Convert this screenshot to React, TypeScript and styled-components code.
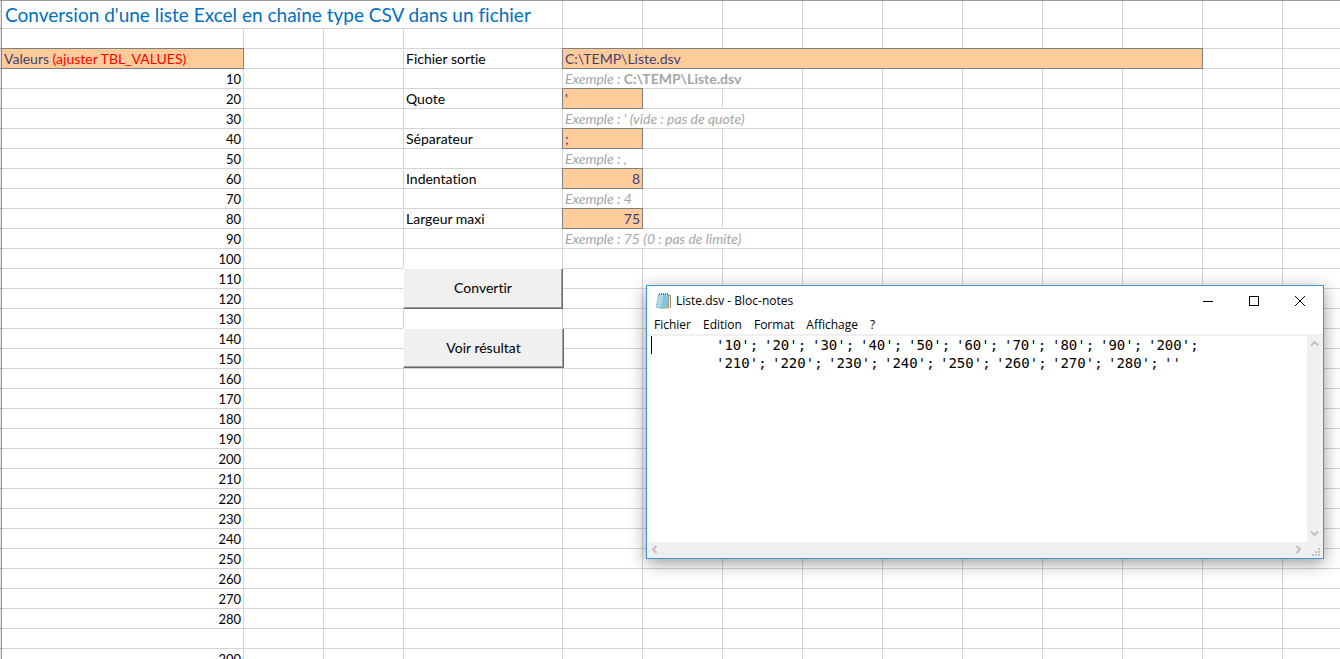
import React from "react";
import styled, { createGlobalStyle, css } from "styled-components";

const GlobalStyle = createGlobalStyle`
  *, *::before, *::after { box-sizing: border-box; }
  body { margin: 0; background: #fff; }
`;

const sheetFont = `Lato, "Open Sans", sans-serif`;
const windowFont = `"Open Sans", "Noto Sans", sans-serif`;

const Desktop = styled.main`
  position: relative;
  height: 100vh;
  overflow: hidden;
  border-top: 1px solid #999;
  font: 14px/19px ${sheetFont};
  font-variant-ligatures: none;
  color: #000;
`;

const Sheet = styled.table`
  width: 100%;
  min-width: 1364px;
  table-layout: fixed;
  border-collapse: separate;
  border-spacing: 0;
`;

const Column = styled.col<{ $width: number }>`
  width: ${(p) => p.$width}px;
`;

const Row = styled.tr<{ $tall?: boolean }>`
  height: ${(p) => (p.$tall ? 28 : 20)}px;
`;

const RowEdge = styled.td`
  padding: 0;
  background: #e4e4e4;
  border-right: 1px solid #999;
  border-bottom: 1px solid #999;
`;

const Cell = styled.td<{ $filled?: boolean; $align?: "left" | "right" }>`
  position: relative;
  padding: 0 2px;
  height: inherit;
  border-right: 1px solid #d4d4d4;
  border-bottom: 1px solid #d4d4d4;
  text-align: ${(p) => p.$align ?? "left"};
  white-space: nowrap;
  ${(p) =>
    p.$filled &&
    css`
      color: #3f3f76;
      background: #ffcc99;
      border-color: #7f7f7f;
      box-shadow: -1px 0 #7f7f7f, 0 -1px #7f7f7f, -1px -1px #7f7f7f;
    `}
`;

const NumberCell = styled(Cell)`
  padding-top: 2px;
  font-size: 13px;
  line-height: 17px;
`;

const Title = styled.h1`
  margin: 0;
  padding: 0 1px;
  font-size: 19px;
  line-height: 27px;
  font-weight: 400;
  color: #0070c0;
`;

const Warning = styled.span`
  color: #f00;
`;

const Label = styled.label`
  display: block;
`;

const Field = styled.input<{ $align?: "left" | "right" }>`
  display: block;
  width: 100%;
  height: 19px;
  padding: 0;
  border: 0;
  outline: 0;
  background: transparent;
  font: inherit;
  color: inherit;
  text-align: ${(p) => p.$align ?? "left"};
`;

const Hint = styled.span`
  font-style: italic;
  color: #a5a5a5;

  b {
    font-style: normal;
  }
`;

const SheetButton = styled.button<{ $width: number; $height: number }>`
  position: absolute;
  z-index: 1;
  top: -1px;
  left: -1px;
  width: ${(p) => p.$width}px;
  height: ${(p) => p.$height}px;
  padding: 0 0 2px;
  border: 1px solid;
  border-color: #fff #696969 #696969 #fff;
  box-shadow: inset -1px -1px #a0a0a0;
  background: #f0f0f0;
  font: inherit;
  color: inherit;
`;

const Notepad = styled.section`
  position: absolute;
  z-index: 2;
  top: 284px;
  left: 646px;
  width: 678px;
  height: 274px;
  display: flex;
  flex-direction: column;
  border: 1px solid #3c98d0;
  background: #fff;
  box-shadow: 0 4px 16px rgba(0, 0, 0, 0.4);
  font: 12px/18px ${windowFont};
`;

const TitleBar = styled.header`
  flex: 0 0 30px;
  display: flex;
  align-items: center;
  padding-left: 8px;
`;

const WindowTitle = styled.h2`
  flex: 1;
  margin: 0;
  padding-left: 4px;
  font: inherit;
`;

const CaptionButton = styled.button`
  display: grid;
  place-items: center;
  width: 46px;
  height: 28px;
  padding: 0;
  border: 0;
  background: transparent;
  color: #000;
`;

const MenuBar = styled.nav`
  flex: 0 0 20px;
  display: flex;
  gap: 12px;
  padding-left: 7px;
  border-bottom: 2px solid #f0f0f0;
`;

const MenuItem = styled.button`
  padding: 0;
  border: 0;
  background: transparent;
  font: inherit;
  color: #000;
`;

const Editor = styled.div`
  flex: 1;
  display: grid;
  grid-template: 1fr 16px / 1fr 16px;
  min-height: 0;
`;

const DocumentArea = styled.div`
  display: flex;
  min-width: 0;
  padding-left: 4px;
`;

const Caret = styled.span`
  flex: 0 0 1px;
  height: 18px;
  background: #000;
`;

const DocumentText = styled.textarea`
  flex: 1;
  min-width: 0;
  padding: 0;
  border: 0;
  outline: 0;
  resize: none;
  overflow: hidden;
  white-space: pre;
  tab-size: 8px;
  background: transparent;
  font: 14px/18px "DejaVu Sans Mono", "Liberation Mono", monospace;
  color: #000;
`;

const ScrollTrack = styled.div<{ $vertical?: boolean }>`
  display: flex;
  flex-direction: ${(p) => (p.$vertical ? "column" : "row")};
  justify-content: space-between;
  background: #f0f0f0;
`;

const ScrollButton = styled.button`
  display: grid;
  place-items: center;
  width: 16px;
  height: 16px;
  padding: 0 1px 1px 0;
  border: 0;
  background: transparent;
  color: #bfbfbf;
`;

const GripCorner = styled.div`
  display: flex;
  align-items: flex-end;
  justify-content: flex-end;
  padding: 0 3px 2px 0;
  background: #f0f0f0;
`;

const arrows = {
  up: "M1 6.500 4.500 3 8 6.500",
  down: "M1 2.500 4.500 6 8 2.500",
  left: "M6.500 1 3 4.500 6.500 8",
  right: "M2.500 1 6 4.500 2.500 8",
};

const Arrow = ({ to }: { to: keyof typeof arrows }) => (
  <svg width="9" height="9" viewBox="0 0 9 9" fill="none" stroke="currentColor" strokeWidth="2">
    <path d={arrows[to]} />
  </svg>
);

const NotepadIcon = () => (
  <svg width="17" height="18" viewBox="0 0 17 18">
    <path d="M4 16.500h10.500l1.500-1V3h-2z" fill="#a8906a" />
    <path d="M3.500 15.500h10.500V4.500h1V15l-1 1.500z" fill="#f5ecd0" />
    <path d="M3.500 2.500h10.500L12.500 15.500H1z" fill="#86c8da" />
    <path d="M3.500 2.500h5L5.500 15.500H1z" fill="#b4e0ea" />
    <path d="M3.300 5h10M3 7.500h10M2.500 10h10M2 12.500h10" stroke="#7cbdd0" strokeWidth=".5" />
    <path d="M3.500 2.500h10.500L12.500 15.500H1z" fill="none" stroke="#6fb0c2" strokeWidth=".5" />
    <path d="M4 2h10" stroke="#4b6a74" strokeWidth="1.500" strokeDasharray="1 1" />
  </svg>
);

const Grip = () => (
  <svg width="8" height="8" viewBox="0 0 8 8" fill="#bfbfbf">
    {[[6, 0], [3, 3], [6, 3], [0, 6], [3, 6], [6, 6]].map(([x, y]) => (
      <rect key={`${x}-${y}`} x={x} y={y} width="2" height="2" />
    ))}
  </svg>
);

const columnWidths = [2, 242, 80, 80, 159, 80, 80, 80, 80, 80, 80, 80, 80, 80];

const values: Record<number, number> = { 33: 200 };
for (let i = 1; i <= 28; i++) values[i + 3] = i * 10;

type Setting = {
  id: string;
  label: string;
  value: string;
  align?: "right";
  span: number;
};

const settings: Record<number, Setting> = {
  3: { id: "output", label: "Fichier sortie", value: "C:\\TEMP\\Liste.dsv", span: 8 },
  5: { id: "quote", label: "Quote", value: "'", span: 1 },
  7: { id: "separator", label: "Séparateur", value: ";", span: 1 },
  9: { id: "indent", label: "Indentation", value: "8", align: "right", span: 1 },
  11: { id: "width", label: "Largeur maxi", value: "75", align: "right", span: 1 },
};

const hints: Record<number, { text: React.ReactNode; span: number }> = {
  4: { text: <>Exemple : <b>C:\TEMP\Liste.dsv</b></>, span: 3 },
  6: { text: "Exemple : ' (vide : pas de quote)", span: 3 },
  8: { text: "Exemple : ,", span: 1 },
  10: { text: "Exemple : 4", span: 1 },
  12: { text: "Exemple : 75 (0 : pas de limite)", span: 3 },
};

const actions: Record<number, { label: string; width: number; height: number }> = {
  14: { label: "Convertir", width: 160, height: 41 },
  17: { label: "Voir résultat", width: 161, height: 40 },
};

const emptyCells = (count: number) => Array.from({ length: count }, (_, i) => <Cell key={i} />);

const SheetRow = ({ n }: { n: number }) => {
  const setting = settings[n];
  const hint = hints[n];
  const action = actions[n];
  const span = setting?.span ?? hint?.span ?? 1;
  return (
    <Row>
      <RowEdge />
      {n === 3 ? (
        <Cell $filled>
          Valeurs <Warning>(ajuster TBL_VALUES)</Warning>
        </Cell>
      ) : (
        <NumberCell $align="right">{values[n]}</NumberCell>
      )}
      {emptyCells(2)}
      <Cell>
        {setting && <Label htmlFor={setting.id}>{setting.label}</Label>}
        {action && (
          <SheetButton type="button" $width={action.width} $height={action.height}>
            {action.label}
          </SheetButton>
        )}
      </Cell>
      <Cell colSpan={span} $filled={!!setting}>
        {setting && <Field id={setting.id} defaultValue={setting.value} $align={setting.align} />}
        {hint && <Hint>{hint.text}</Hint>}
      </Cell>
      {emptyCells(10 - span)}
    </Row>
  );
};

const tab = "\t";
const indent = tab.repeat(8);
const documentLines = [
  ["10", "20", "30", "40", "50", "60", "70", "80", "90", "200"],
  ["210", "220", "230", "240", "250", "260", "270", "280", ""],
];
const documentText = documentLines
  .map((line) => indent + line.map((v) => `'${v}'`).join(";" + tab))
  .join(";\n");

export default function App() {
  return (
    <>
      <GlobalStyle />
      <Desktop>
        <Sheet>
          <colgroup>
            {columnWidths.map((w, i) => (
              <Column key={i} $width={w} />
            ))}
            <col />
          </colgroup>
          <tbody>
            <Row $tall>
              <RowEdge />
              <Cell colSpan={4}>
                <Title>Conversion d'une liste Excel en chaîne type CSV dans un fichier</Title>
              </Cell>
              {emptyCells(10)}
            </Row>
            {Array.from({ length: 32 }, (_, i) => (
              <SheetRow key={i} n={i + 2} />
            ))}
          </tbody>
        </Sheet>

        <Notepad aria-label="Bloc-notes">
          <TitleBar>
            <NotepadIcon />
            <WindowTitle>Liste.dsv - Bloc-notes</WindowTitle>
            <CaptionButton type="button" aria-label="Réduire">
              <svg width="10" height="10" viewBox="0 0 10 10">
                <path d="M0 5.500h10" stroke="currentColor" />
              </svg>
            </CaptionButton>
            <CaptionButton type="button" aria-label="Agrandir">
              <svg width="10" height="10" viewBox="0 0 10 10">
                <rect x=".5" y=".5" width="9" height="9" fill="none" stroke="currentColor" />
              </svg>
            </CaptionButton>
            <CaptionButton type="button" aria-label="Fermer">
              <svg width="10" height="10" viewBox="0 0 10 10">
                <path d="M0 0 10 10M10 0 0 10" stroke="currentColor" />
              </svg>
            </CaptionButton>
          </TitleBar>
          <MenuBar>
            {["Fichier", "Edition", "Format", "Affichage", "?"].map((item) => (
              <MenuItem key={item} type="button">
                {item}
              </MenuItem>
            ))}
          </MenuBar>
          <Editor>
            <DocumentArea>
              <Caret />
              <DocumentText aria-label="Contenu du fichier" defaultValue={documentText} spellCheck={false} />
            </DocumentArea>
            <ScrollTrack $vertical>
              <ScrollButton type="button" aria-label="Haut">
                <Arrow to="up" />
              </ScrollButton>
              <ScrollButton type="button" aria-label="Bas">
                <Arrow to="down" />
              </ScrollButton>
            </ScrollTrack>
            <ScrollTrack>
              <ScrollButton type="button" aria-label="Gauche">
                <Arrow to="left" />
              </ScrollButton>
              <ScrollButton type="button" aria-label="Droite">
                <Arrow to="right" />
              </ScrollButton>
            </ScrollTrack>
            <GripCorner>
              <Grip />
            </GripCorner>
          </Editor>
        </Notepad>
      </Desktop>
    </>
  );
}
